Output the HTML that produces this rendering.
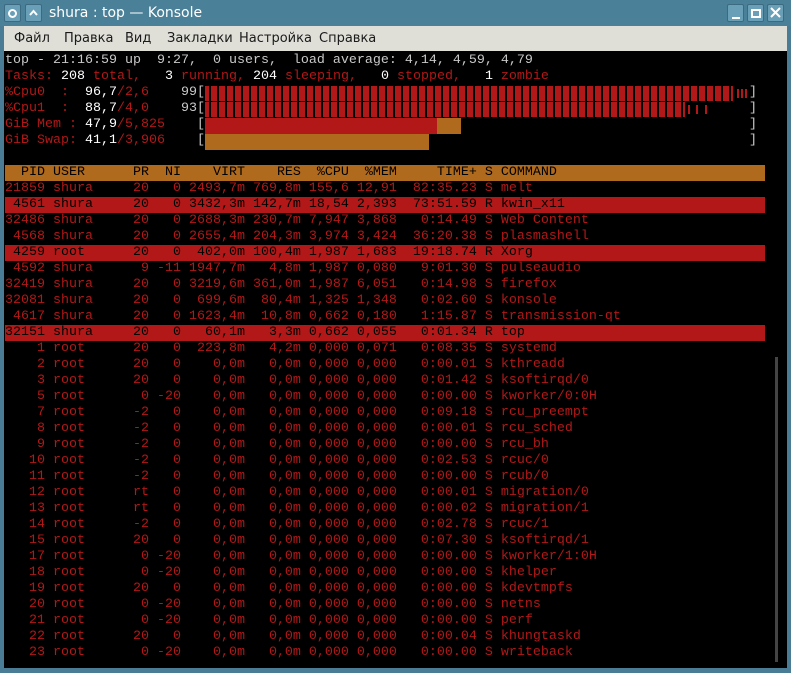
<!DOCTYPE html>
<html><head><meta charset="utf-8"><style>
*{margin:0;padding:0;box-sizing:border-box}
body{width:791px;height:673px;background:#4a7d95;position:relative;overflow:hidden;font-family:"Liberation Sans","DejaVu Sans",sans-serif}
.tb{position:absolute;left:0;top:0;width:791px;height:26px;background:#4b8099}
.btn{position:absolute;top:4px;width:17px;height:18px;background:#6a9fb8;border:1px solid #3c6a80;border-radius:2px}
.title{position:absolute;left:49px;top:5px;color:#fff;font-size:14px;font-family:"DejaVu Sans",sans-serif}
.menu{position:absolute;left:4px;top:26px;width:783px;height:25px;background:#dfdfd8;font-family:"DejaVu Sans",sans-serif;font-size:13px;color:#1a1a1a}
.menu span{position:absolute;top:5px}
.term{position:absolute;left:4px;top:51px;width:783px;height:617px;background:#000;overflow:hidden}
.l{position:absolute;left:1px;height:16px;line-height:16px;white-space:pre;font-family:"Liberation Mono",monospace;font-size:13.33px;color:#b21818}
.g{color:#c8c8c8}.w{color:#fff}.r{color:#b21818}
.hl{background:#b21818;color:#000;width:760px}
.hd{background:#b06a1e;color:#000;width:760px}
.bar{position:absolute;height:16px}
</style></head><body>
<div class="tb">
<div class="btn" style="left:4px"><div style="position:absolute;left:3px;top:4px;width:9px;height:9px;border:2px solid #fff;border-radius:50%"></div></div>
<div class="btn" style="left:25px"><svg width="15" height="16" style="position:absolute;left:0;top:0"><path d="M4 10 L7.5 6 L11 10" stroke="#fff" stroke-width="2" fill="none"/></svg></div>
<div class="title">shura : top — Konsole</div>
<div class="btn" style="left:727px"><div style="position:absolute;left:4px;top:12px;width:8px;height:2px;background:#fff"></div></div>
<div class="btn" style="left:747px"><div style="position:absolute;left:3px;top:4px;width:10px;height:9px;border:2px solid #fff"></div></div>
<div class="btn" style="left:767px"><svg width="15" height="16" style="position:absolute;left:0;top:0"><path d="M3 3 L12 12 M12 3 L3 12" stroke="#fff" stroke-width="2"/></svg></div>
</div>
<div class="menu"><span style="left:10px">Файл</span><span style="left:60px">Правка</span><span style="left:121px">Вид</span><span style="left:163px">Закладки</span><span style="left:235px">Настройка</span><span style="left:315px">Справка</span></div>
<div class="term">
<div class="l g" style="top:2px">top - 21:16:59 up  9:27,  0 users,  load average: 4,14, 4,59, 4,79</div>
<div class="l" style="top:18px">Tasks: <span class="w">208</span> total,   <span class="w">3</span> running, <span class="w">204</span> sleeping,   <span class="w">0</span> stopped,   <span class="w">1</span> zombie</div>
<div class="l" style="top:34px">%Cpu0  :  <span class="w">96,7</span>/2,6    <span class="g">99[</span></div>
<div class="l" style="top:50px">%Cpu1  :  <span class="w">88,7</span>/4,0    <span class="g">93[</span></div>
<div class="l" style="top:66px">GiB Mem : <span class="w">47,9</span>/5,825    <span class="g">[</span></div>
<div class="l" style="top:82px">GiB Swap: <span class="w">41,1</span>/3,906    <span class="g">[</span></div>
<div class="bar" style="left:201px;top:35px;width:528px;height:15px;background:repeating-linear-gradient(90deg,#b21818 0 4px,#000 4px 6px,#b21818 6px 8px)"></div>
<div class="bar" style="left:733px;top:38px;width:2px;height:9px;background:#b21818"></div>
<div class="bar" style="left:737px;top:38px;width:2px;height:9px;background:#b21818"></div>
<div class="bar" style="left:741px;top:38px;width:2px;height:9px;background:#b21818"></div>
<div class="bar" style="left:201px;top:51px;width:480px;height:15px;background:repeating-linear-gradient(90deg,#b21818 0 4px,#000 4px 6px,#b21818 6px 8px)"></div>
<div class="bar" style="left:684px;top:54px;width:2px;height:9px;background:#b21818"></div>
<div class="bar" style="left:692px;top:54px;width:2px;height:9px;background:#b21818"></div>
<div class="bar" style="left:701px;top:54px;width:2px;height:9px;background:#b21818"></div>
<div class="bar" style="left:201px;top:67px;width:232px;background:#b21818"></div>
<div class="bar" style="left:433px;top:67px;width:24px;background:#b06a1e"></div>
<div class="bar" style="left:201px;top:83px;width:224px;background:#b06a1e"></div>
<div class="l g" style="top:34px;left:745px">]</div>
<div class="l g" style="top:50px;left:745px">]</div>
<div class="l g" style="top:66px;left:745px">]</div>
<div class="l g" style="top:82px;left:745px">]</div>
<div class="l hd" style="top:114px">  PID USER      PR  NI    VIRT    RES  %CPU  %MEM     TIME+ S COMMAND</div>
<div class="l" style="top:130px">21859 shura     20   0 2493,7m 769,8m 155,6 12,91  82:35.23 S melt</div>
<div class="l hl" style="top:146px"> 4561 shura     20   0 3432,3m 142,7m 18,54 2,393  73:51.59 R kwin_x11</div>
<div class="l" style="top:162px">32486 shura     20   0 2688,3m 230,7m 7,947 3,868   0:14.49 S Web Content</div>
<div class="l" style="top:178px"> 4568 shura     20   0 2655,4m 204,3m 3,974 3,424  36:20.38 S plasmashell</div>
<div class="l hl" style="top:194px"> 4259 root      20   0  402,0m 100,4m 1,987 1,683  19:18.74 R Xorg</div>
<div class="l" style="top:210px"> 4592 shura      9 -11 1947,7m   4,8m 1,987 0,080   9:01.30 S pulseaudio</div>
<div class="l" style="top:226px">32419 shura     20   0 3219,6m 361,0m 1,987 6,051   0:14.98 S firefox</div>
<div class="l" style="top:242px">32081 shura     20   0  699,6m  80,4m 1,325 1,348   0:02.60 S konsole</div>
<div class="l" style="top:258px"> 4617 shura     20   0 1623,4m  10,8m 0,662 0,180   1:15.87 S transmission-qt</div>
<div class="l hl" style="top:274px">32151 shura     20   0   60,1m   3,3m 0,662 0,055   0:01.34 R top</div>
<div class="l" style="top:290px">    1 root      20   0  223,8m   4,2m 0,000 0,071   0:08.35 S systemd</div>
<div class="l" style="top:306px">    2 root      20   0    0,0m   0,0m 0,000 0,000   0:00.01 S kthreadd</div>
<div class="l" style="top:322px">    3 root      20   0    0,0m   0,0m 0,000 0,000   0:01.42 S ksoftirqd/0</div>
<div class="l" style="top:338px">    5 root       0 -20    0,0m   0,0m 0,000 0,000   0:00.00 S kworker/0:0H</div>
<div class="l" style="top:354px">    7 root      -2   0    0,0m   0,0m 0,000 0,000   0:09.18 S rcu_preempt</div>
<div class="l" style="top:370px">    8 root      -2   0    0,0m   0,0m 0,000 0,000   0:00.01 S rcu_sched</div>
<div class="l" style="top:386px">    9 root      -2   0    0,0m   0,0m 0,000 0,000   0:00.00 S rcu_bh</div>
<div class="l" style="top:402px">   10 root      -2   0    0,0m   0,0m 0,000 0,000   0:02.53 S rcuc/0</div>
<div class="l" style="top:418px">   11 root      -2   0    0,0m   0,0m 0,000 0,000   0:00.00 S rcub/0</div>
<div class="l" style="top:434px">   12 root      rt   0    0,0m   0,0m 0,000 0,000   0:00.01 S migration/0</div>
<div class="l" style="top:450px">   13 root      rt   0    0,0m   0,0m 0,000 0,000   0:00.02 S migration/1</div>
<div class="l" style="top:466px">   14 root      -2   0    0,0m   0,0m 0,000 0,000   0:02.78 S rcuc/1</div>
<div class="l" style="top:482px">   15 root      20   0    0,0m   0,0m 0,000 0,000   0:07.30 S ksoftirqd/1</div>
<div class="l" style="top:498px">   17 root       0 -20    0,0m   0,0m 0,000 0,000   0:00.00 S kworker/1:0H</div>
<div class="l" style="top:514px">   18 root       0 -20    0,0m   0,0m 0,000 0,000   0:00.00 S khelper</div>
<div class="l" style="top:530px">   19 root      20   0    0,0m   0,0m 0,000 0,000   0:00.00 S kdevtmpfs</div>
<div class="l" style="top:546px">   20 root       0 -20    0,0m   0,0m 0,000 0,000   0:00.00 S netns</div>
<div class="l" style="top:562px">   21 root       0 -20    0,0m   0,0m 0,000 0,000   0:00.00 S perf</div>
<div class="l" style="top:578px">   22 root      20   0    0,0m   0,0m 0,000 0,000   0:00.04 S khungtaskd</div>
<div class="l" style="top:594px">   23 root       0 -20    0,0m   0,0m 0,000 0,000   0:00.00 S writeback</div>
<div style="position:absolute;left:771px;top:306px;width:3px;height:305px;background:#444"></div>
</div>
</body></html>
